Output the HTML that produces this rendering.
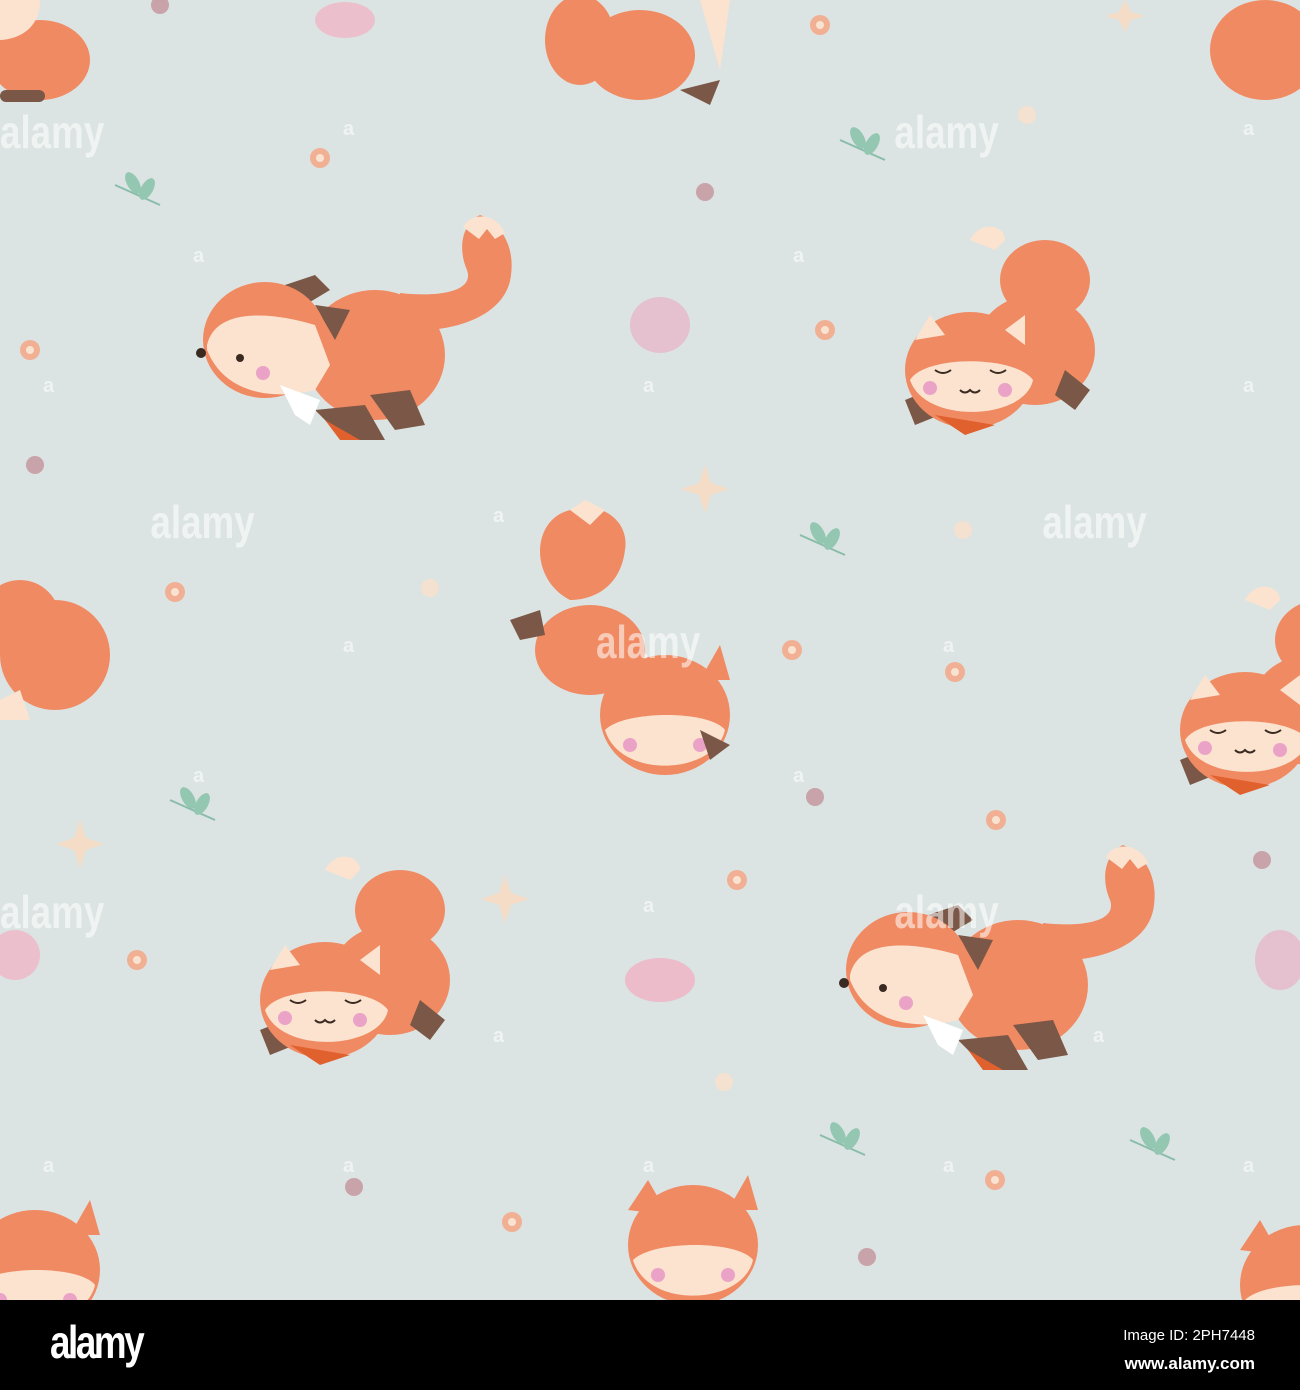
<!DOCTYPE html>
<html><head><meta charset="utf-8"><style>
html,body{margin:0;padding:0;width:1300px;height:1390px;overflow:hidden;background:#000}
svg{display:block}
</style></head><body>
<svg width="1300" height="1390" viewBox="0 0 1300 1390" xmlns="http://www.w3.org/2000/svg">
<defs>
<g id="run">
  <!-- tail -->
  <path d="M200 115 C 260 120 312 100 316 60 C 320 30 305 8 285 0 C 268 8 262 32 272 55 C 280 78 240 82 205 78 Z" fill="#f08a63"/>
  <path d="M268 12 C 275 -2 300 -4 310 18 L300 24 L292 14 L284 24 Z" fill="#fbe3cf"/>
  <!-- body -->
  <ellipse cx="180" cy="140" rx="70" ry="65" fill="#f08a63"/>
  <path d="M175 180 L200 215 L230 210 L215 175 Z" fill="#7a5746"/>
  <path d="M120 195 L150 225 L190 225 L170 190 Z" fill="#7a5746"/>
  <path d="M130 205 L145 225 L165 225 Z" fill="#e0602e"/>
  <!-- ears -->
  <path d="M90 70 L120 60 L135 75 L110 90 Z" fill="#7a5746"/>
  <path d="M120 90 L155 95 L140 125 Z" fill="#7a5746"/>
  <!-- head -->
  <ellipse cx="70" cy="125" rx="62" ry="58" fill="#f08a63"/>
  <path d="M12 130 C 20 95 70 95 120 110 L135 150 L120 175 C 80 185 30 180 12 135 Z" fill="#fbe3cf"/>
  <path d="M85 170 L100 200 L115 210 L125 185 Z" fill="#fff"/>
  <circle cx="6" cy="138" r="5" fill="#3a2a22"/>
  <circle cx="45" cy="143" r="4" fill="#3a2a22"/>
  <circle cx="68" cy="158" r="7" fill="#eaa3c6"/>
</g>
<g id="sleep">
  <ellipse cx="140" cy="60" rx="45" ry="40" fill="#f08a63"/>
  <path d="M65 20 C 75 0 100 5 100 20 L90 30 Z" fill="#fbe3cf"/>
  <ellipse cx="130" cy="130" rx="60" ry="55" fill="#f08a63"/>
  <path d="M160 150 L185 170 L170 190 L150 175 Z" fill="#7a5746"/>
  <path d="M0 180 L25 170 L35 195 L10 205 Z" fill="#7a5746"/>
  <ellipse cx="65" cy="150" rx="65" ry="58" fill="#f08a63"/>
  <path d="M10 120 L25 95 L40 115 Z" fill="#fbe3cf"/>
  <path d="M100 110 L120 95 L120 125 Z" fill="#fbe3cf"/>
  <path d="M5 160 C 20 135 110 135 128 160 C 120 200 20 205 5 160 Z" fill="#fbe3cf"/>
  <circle cx="25" cy="168" r="7" fill="#eaa3c6"/>
  <circle cx="100" cy="170" r="7" fill="#eaa3c6"/>
  <path d="M30 150 q8 6 16 0 M85 150 q8 6 16 0 M55 170 q5 5 10 0 q5 5 10 0" stroke="#3a2a22" stroke-width="2" fill="none"/>
  <path d="M30 195 L60 215 L90 205 Z" fill="#e0602e"/>
</g>
<g id="head">
  <path d="M0 40 L20 10 L40 45 Z" fill="#f08a63"/>
  <path d="M100 40 L120 5 L130 40 Z" fill="#f08a63"/>
  <ellipse cx="65" cy="75" rx="65" ry="60" fill="#f08a63"/>
  <path d="M5 90 C 25 70 110 70 125 90 C 115 135 20 140 5 90 Z" fill="#fbe3cf"/>
  <circle cx="30" cy="105" r="7" fill="#eaa3c6"/>
  <circle cx="100" cy="105" r="7" fill="#eaa3c6"/>
</g>
<g id="leaf"><path d="M0 30 L45 50" stroke="#7fb8a2" stroke-width="2" fill="none"/><ellipse cx="18" cy="28" rx="6" ry="12" transform="rotate(-30 18 28)" fill="#8cc3ad"/><ellipse cx="32" cy="34" rx="6" ry="12" transform="rotate(30 32 34)" fill="#8cc3ad"/></g>
<g id="flower"><circle r="10" fill="#f3a98c"/><circle r="4" fill="#fbe3cf"/></g>
</defs>
<rect width="1300" height="1300" fill="#dce4e3"/>

<g opacity="0.9">
<use href="#leaf" x="115" y="155"/><use href="#leaf" x="820" y="1105"/><use href="#leaf" x="800" y="505"/>
<use href="#leaf" x="840" y="110"/><use href="#leaf" x="1130" y="1110"/><use href="#leaf" x="170" y="770"/>
<use href="#flower" x="320" y="158"/><use href="#flower" x="825" y="330"/><use href="#flower" x="175" y="592"/>
<use href="#flower" x="792" y="650"/><use href="#flower" x="996" y="820"/><use href="#flower" x="737" y="880"/>
<use href="#flower" x="137" y="960"/><use href="#flower" x="995" y="1180"/><use href="#flower" x="512" y="1222"/>
<use href="#flower" x="820" y="25"/><use href="#flower" x="955" y="672"/><use href="#flower" x="30" y="350"/>
</g>
<g>
<circle cx="705" cy="192" r="9" fill="#c9a3aa"/><circle cx="1027" cy="115" r="9" fill="#f4e1cf"/>
<circle cx="35" cy="465" r="9" fill="#c9a3aa"/><circle cx="430" cy="588" r="9" fill="#f4e1cf"/>
<circle cx="963" cy="530" r="9" fill="#f4e1cf"/><circle cx="815" cy="797" r="9" fill="#c9a3aa"/>
<circle cx="1262" cy="860" r="9" fill="#c9a3aa"/><circle cx="724" cy="1082" r="9" fill="#f4e1cf"/>
<circle cx="354" cy="1187" r="9" fill="#c9a3aa"/><circle cx="867" cy="1257" r="9" fill="#c9a3aa"/>
<circle cx="160" cy="5" r="9" fill="#c9a3aa"/>
<ellipse cx="660" cy="325" rx="30" ry="28" fill="#e7b7c9" opacity="0.8"/>
<ellipse cx="660" cy="980" rx="35" ry="22" fill="#efb5c6" opacity="0.85"/>
<ellipse cx="345" cy="20" rx="30" ry="18" fill="#efb5c6" opacity="0.8"/>
<ellipse cx="15" cy="955" rx="25" ry="25" fill="#efb5c6" opacity="0.8"/>
<ellipse cx="1280" cy="960" rx="25" ry="30" fill="#e7b7c9" opacity="0.8"/>
<path d="M705 465 l6 18 18 6 -18 6 -6 18 -6 -18 -18 -6 18 -6 Z" fill="#f5dcc6"/>
<path d="M80 820 l6 18 18 6 -18 6 -6 18 -6 -18 -18 -6 18 -6 Z" fill="#f5dcc6"/>
<path d="M505 875 l6 18 18 6 -18 6 -6 18 -6 -18 -18 -6 18 -6 Z" fill="#f5dcc6"/>
<path d="M1125 0 l6 12 14 4 -14 4 -6 12 -6 -12 -14 -4 14 -4 Z" fill="#f5dcc6"/>
</g>

<use href="#run" x="195" y="215"/>
<use href="#run" x="838" y="845"/>
<use href="#sleep" x="905" y="220"/>
<use href="#sleep" x="260" y="850"/>
<use href="#sleep" x="1180" y="580"/>
<g transform="translate(510,500)">
  <path d="M60 100 C 20 80 20 20 60 10 C 90 0 120 20 115 50 C 110 90 80 100 60 100 Z" fill="#f08a63"/>
  <path d="M60 10 L75 0 L95 10 L80 25 Z" fill="#fbe3cf"/>
  <ellipse cx="80" cy="150" rx="55" ry="45" fill="#f08a63"/>
  <path d="M0 120 L30 110 L35 135 L10 140 Z" fill="#7a5746"/>
  <use href="#head" x="90" y="140"/>
  <path d="M190 230 L220 245 L200 260 Z" fill="#7a5746"/>
</g>
<use href="#head" x="628" y="1170"/>
<use href="#head" x="-30" y="1195"/>
<use href="#head" x="1240" y="1210"/>
<g><ellipse cx="55" cy="655" rx="55" ry="55" fill="#f08a63"/><ellipse cx="20" cy="620" rx="40" ry="40" fill="#f08a63"/><path d="M0 700 L20 690 L30 720 L0 720 Z" fill="#fbe3cf"/></g>
<g><ellipse cx="40" cy="60" rx="50" ry="40" fill="#f08a63"/><path d="M0 0 L40 0 C 40 40 0 40 0 40 Z" fill="#fbe3cf"/><rect x="0" y="90" width="45" height="12" rx="6" fill="#7a5746"/></g>
<g><ellipse cx="640" cy="55" rx="55" ry="45" fill="#f08a63"/><ellipse cx="580" cy="40" rx="35" ry="45" fill="#f08a63"/><path d="M700 0 L730 0 L720 70 Z" fill="#fbe3cf"/><path d="M680 90 L710 105 L720 80 Z" fill="#7a5746"/></g>
<g><ellipse cx="1265" cy="50" rx="55" ry="50" fill="#f08a63"/></g>

<g fill="#ffffff" opacity="0.55" font-family="Liberation Sans, sans-serif" font-weight="bold" font-size="46" transform="scale(0.8,1)">
<text x="0" y="148">alamy</text><text x="1118" y="148">alamy</text>
<text x="188" y="538">alamy</text><text x="1303" y="538">alamy</text>
<text x="745" y="658">alamy</text>
<text x="0" y="928">alamy</text><text x="1118" y="928">alamy</text>
</g>
<g fill="#ffffff" opacity="0.55" font-family="Liberation Sans, sans-serif" font-weight="bold" font-size="20">
<text x="343" y="135">a</text><text x="1243" y="135">a</text><text x="193" y="262">a</text><text x="793" y="262">a</text>
<text x="43" y="392">a</text><text x="643" y="392">a</text><text x="1243" y="392">a</text><text x="493" y="522">a</text>
<text x="343" y="652">a</text><text x="943" y="652">a</text><text x="193" y="782">a</text><text x="793" y="782">a</text>
<text x="643" y="912">a</text><text x="493" y="1042">a</text><text x="1093" y="1042">a</text><text x="343" y="1172">a</text>
<text x="943" y="1172">a</text><text x="43" y="1172">a</text><text x="1243" y="1172">a</text><text x="643" y="1172">a</text>
</g>

<rect y="1300" width="1300" height="90" fill="#000"/>
<text x="50" y="1358" fill="#fff" font-family="Liberation Sans, sans-serif" font-weight="bold" font-size="46" transform="translate(10,0) scale(0.8,1)" style="letter-spacing:-3px">alamy</text>
<text x="1255" y="1340" fill="#fff" text-anchor="end" font-family="Liberation Sans, sans-serif" font-size="15">Image ID: 2PH7448</text>
<text x="1255" y="1369" fill="#fff" text-anchor="end" font-family="Liberation Sans, sans-serif" font-size="17" font-weight="bold">www.alamy.com</text>
</svg>
</body></html>
